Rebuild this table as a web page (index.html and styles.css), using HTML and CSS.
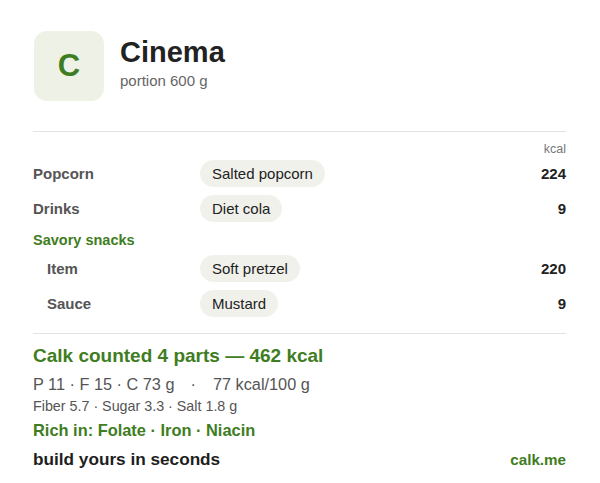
FILE: index.html
```html
<!DOCTYPE html>
<html>
<head>
<meta charset="utf-8">
<link rel="stylesheet" href="styles.css">
</head>
<body>
<div class="card">
  <header class="head">
    <div class="logo">C</div>
    <div class="titles">
      <div class="title">Cinema</div>
      <div class="sub">portion 600 g</div>
    </div>
  </header>
  <div class="rule rule-top"></div>
  <div class="unit">kcal</div>
  <div class="rows">
    <div class="row"><span class="label">Popcorn</span><span class="pillcell"><span class="pill">Salted popcorn</span></span><span class="val">224</span></div>
    <div class="row"><span class="label">Drinks</span><span class="pillcell"><span class="pill">Diet cola</span></span><span class="val">9</span></div>
  </div>
  <div class="group">Savory snacks</div>
  <div class="rows">
    <div class="row"><span class="label indent">Item</span><span class="pillcell"><span class="pill">Soft pretzel</span></span><span class="val">220</span></div>
    <div class="row"><span class="label indent">Sauce</span><span class="pillcell"><span class="pill">Mustard</span></span><span class="val">9</span></div>
  </div>
  <div class="rule rule-bottom"></div>
  <div class="total">Calk counted 4 parts — 462 kcal</div>
  <div class="macros"><span>P 11 · F 15 · C 73 g</span><span class="dot">·</span><span>77 kcal/100 g</span></div>
  <div class="micros">Fiber 5.7 · Sugar 3.3 · Salt 1.8 g</div>
  <div class="rich">Rich in: Folate · Iron · Niacin</div>
  <div class="foot"><span class="cta">build yours in seconds</span><span class="brand">calk.me</span></div>
</div>
</body>
</html>
```
FILE: styles.css
```css
html, body {
  margin: 0;
  padding: 0;
  background: #ffffff;
}
body {
  font-family: "Liberation Sans", Arial, sans-serif;
  color: #222;
}
.card {
  padding: 31px 34px 0 33px;
}
.head {
  display: flex;
  align-items: flex-start;
  gap: 16px;
}
.logo {
  width: 70px;
  height: 70px;
  border-radius: 13px;
  background: #eef2e6;
  color: #3f7d22;
  font-weight: bold;
  font-size: 31px;
  display: flex;
  align-items: center;
  justify-content: center;
  margin-left: 1px;
}
.titles {
  padding-top: 5px;
}
.title {
  font-size: 29px;
  font-weight: bold;
  line-height: 33px;
  color: #222;
}
.sub {
  font-size: 15px;
  line-height: 17px;
  color: #666;
  margin-top: 3px;
}
.rule {
  height: 1px;
  background: #e3e3e3;
}
.rule-top {
  margin-top: 30px;
}
.unit {
  margin-top: 10px;
  text-align: right;
  font-size: 12.5px;
  line-height: 14px;
  color: #777;
}
.row {
  display: grid;
  grid-template-columns: 167px 1fr auto;
  align-items: center;
  height: 35px;
}
.label {
  font-size: 15px;
  font-weight: bold;
  color: #555;
}
.label.indent {
  padding-left: 14px;
}
.pill {
  display: inline-block;
  background: #f1f1ec;
  border-radius: 14px;
  padding: 5px 12px;
  font-size: 15px;
  line-height: 17px;
  color: #222;
}
.val {
  font-size: 15px;
  font-weight: bold;
  color: #222;
}
.group {
  margin-top: 6px;
  font-size: 14.5px;
  line-height: 17px;
  font-weight: bold;
  color: #3f7d22;
  margin-bottom: 2px;
}
.rule-bottom {
  margin-top: 12px;
}
.total {
  margin-top: 11px;
  font-size: 19px;
  line-height: 21px;
  font-weight: bold;
  color: #3f7d22;
}
.macros {
  margin-top: 9px;
  font-size: 16.3px;
  line-height: 18px;
  color: #555;
}
.macros .dot {
  margin: 0 17px 0 16px;
}
.micros {
  margin-top: 5px;
  font-size: 14.3px;
  line-height: 16px;
  color: #555;
}
.rich {
  margin-top: 7px;
  font-size: 16.4px;
  line-height: 18px;
  font-weight: bold;
  color: #3f7d22;
}
.foot {
  margin-top: 10px;
  display: flex;
  justify-content: space-between;
  align-items: baseline;
}
.cta {
  font-size: 17.2px;
  font-weight: bold;
  color: #1e1e1e;
}
.brand {
  font-size: 15.2px;
  font-weight: bold;
  color: #3f7d22;
}
```
